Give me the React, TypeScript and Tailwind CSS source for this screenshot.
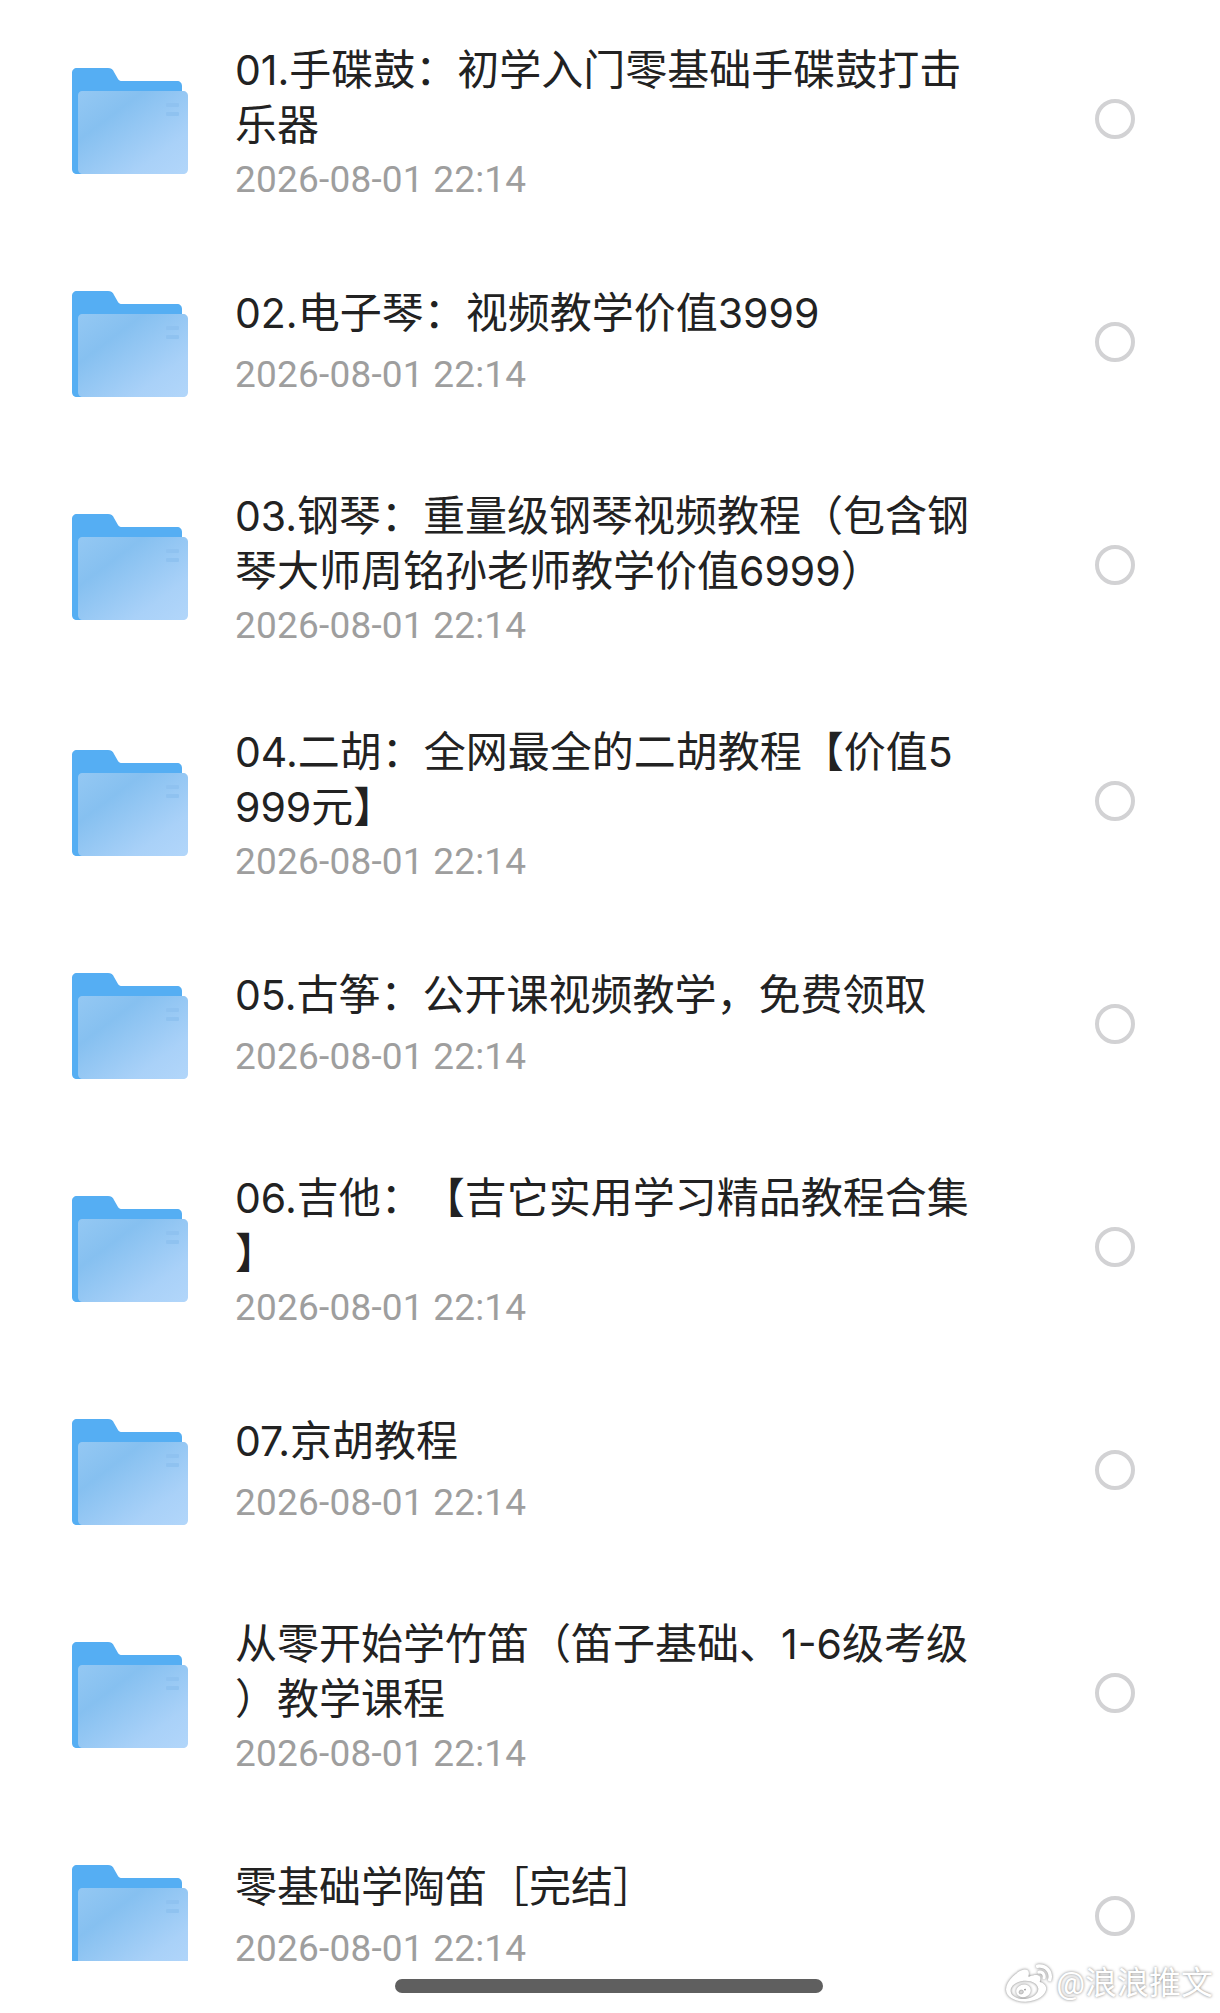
import { SiSinaweibo } from "react-icons/si";

const rows: { lines: string[]; extra?: boolean }[] = [
  { lines: ["01.手碟鼓：初学入门零基础手碟鼓打击", "乐器"] },
  { lines: ["02.电子琴：视频教学价值3999"] },
  { lines: ["03.钢琴：重量级钢琴视频教程（包含钢", "琴大师周铭孙老师教学价值6999）"] },
  { lines: ["04.二胡：全网最全的二胡教程【价值5", "999元】"], extra: true },
  { lines: ["05.古筝：公开课视频教学，免费领取"] },
  { lines: ["06.吉他：【吉它实用学习精品教程合集", "】"] },
  { lines: ["07.京胡教程"] },
  { lines: ["从零开始学竹笛（笛子基础、1-6级考级", "）教学课程"] },
  { lines: ["零基础学陶笛［完结］"] },
];

function Title({ text }: { text: string }) {
  return (
    <div>
      {text.split(/([0-9.\-]+)/).map((part, k) =>
        /^[0-9.\-]+$/.test(part) ? (
          <span key={k} className="font-['Inter','Noto_Sans_CJK_SC',sans-serif] text-[41px]">
            {part}
          </span>
        ) : (
          <span key={k}>{part}</span>
        ),
      )}
    </div>
  );
}

function Folder({ id }: { id: number }) {
  return (
    <svg width="116" height="106" viewBox="0 0 116 106" className="shrink-0">
      <defs>
        <linearGradient id={`f${id}`} x1="0" y1="0" x2="1" y2="1">
          <stop offset="0" stopColor="#94c8f3" />
          <stop offset="0.3" stopColor="#86c0f0" />
          <stop offset="0.75" stopColor="#a9d1f8" />
          <stop offset="1" stopColor="#b2d6fa" />
        </linearGradient>
      </defs>
      <path
        d="M5 0H36C39 0 41 1.500 42 4L46 11C47 12.500 48 13 50 13H105C108 13 110 15 110 18V106H5C2 106 0 104 0 101V5C0 2 2 0 5 0Z"
        fill="#55aef3"
      />
      <path
        d="M10 23H111C114 23 116 25 116 28V101C116 104 114 106 111 106H11C8 106 6 104 6 101V27C6 25 8 23 10 23Z"
        fill={`url(#f${id})`}
      />
      <rect x="94" y="35" width="13" height="4" rx="1" fill="#8fc2f0" />
      <rect x="94" y="44" width="13" height="4" rx="1" fill="#8fc2f0" />
    </svg>
  );
}

export default function App() {
  return (
    <div className="relative w-[1220px] h-[2013px] bg-white overflow-hidden font-['Roboto','Noto_Sans_CJK_SC',sans-serif]">
      <div className="h-[1961px] overflow-hidden pt-[7px]">
        {rows.map((r, i) => (
          <div
            key={i}
            className={`h-[223px] flex items-center pl-[72px] pr-[85px] ${r.extra ? "mt-[13px]" : ""}`}
          >
            <div className="pt-[4px]">
              <Folder id={i} />
            </div>
            <div className={`ml-[47px] flex-1 ${r.lines.length > 1 ? "mt-[12px]" : "mt-[5px]"}`}>
              <div className="text-[42px] leading-[55px] text-[#222222] whitespace-nowrap [text-spacing-trim:space-all]">
                {r.lines.map((l, j) => (
                  <Title key={j} text={l} />
                ))}
              </div>
              <div
                className={`text-[37px] leading-[55px] tracking-[0.2px] text-[#9e9e9e] ${r.lines.length > 1 ? "-mt-[1px]" : "mt-[6px]"}`}
              >
                2026-08-01 22:14
              </div>
            </div>
            <div className="w-[40px] h-[40px] rounded-full border-[4px] border-[#d2d2d4] shrink-0" />
          </div>
        ))}
      </div>
      <div className="mt-[18px] ml-[395px] w-[428px] h-[14px] rounded-full bg-[#5f5f5f]" />
      <div className="absolute right-[7px] bottom-[7px] flex items-center gap-[4px] text-white">
        <SiSinaweibo className="w-[46px] h-[46px] [filter:drop-shadow(0_0_1.5px_#777)]" />
        <span className="text-[32px] leading-[38px] [text-shadow:0_0_3px_#777]">@浪浪推文</span>
      </div>
    </div>
  );
}
